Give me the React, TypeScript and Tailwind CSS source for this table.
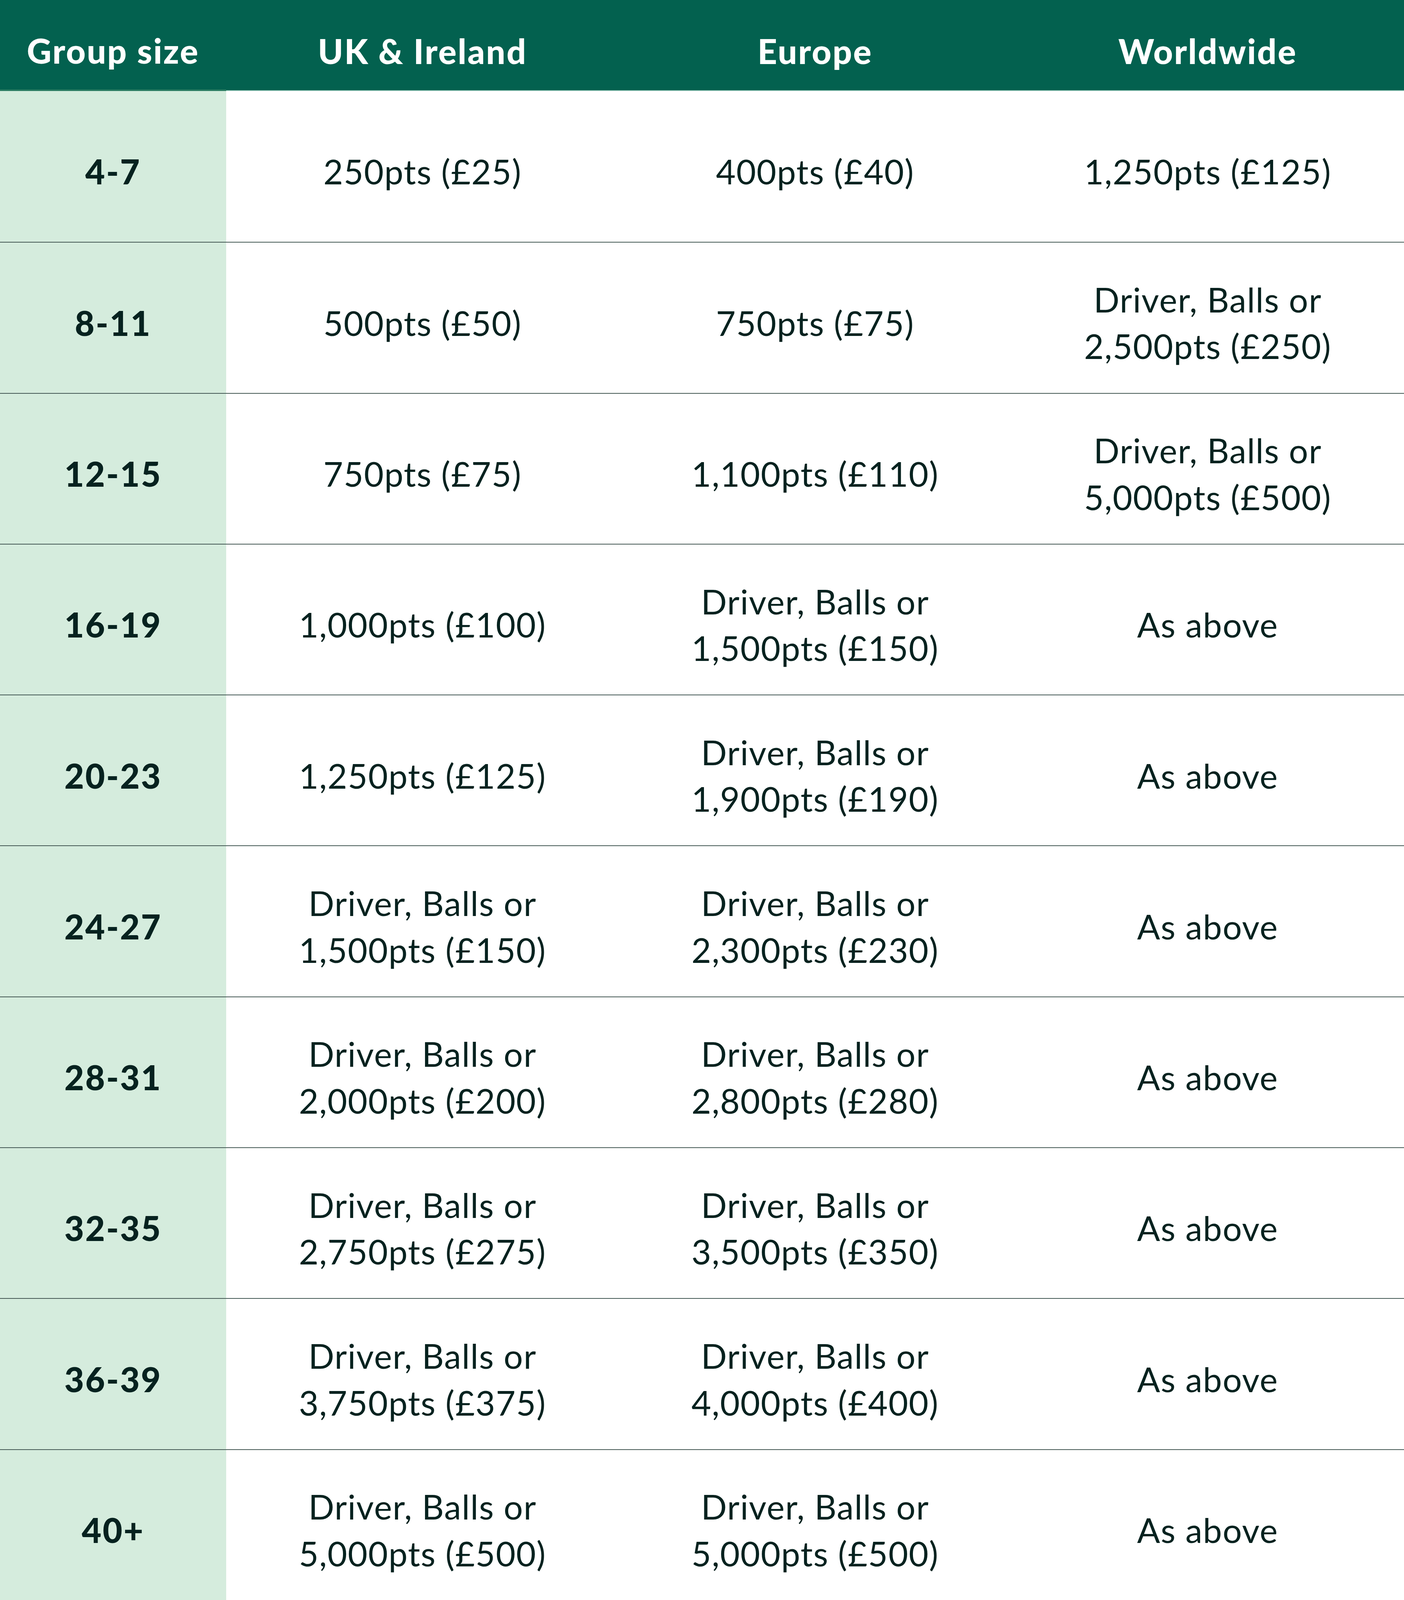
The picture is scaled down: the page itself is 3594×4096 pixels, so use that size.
import React from "react";

const rows: { size: string; uk: string[]; eu: string[]; ww: string[] }[] = [
  { size: "4-7", uk: ["250pts (£25)"], eu: ["400pts (£40)"], ww: ["1,250pts (£125)"] },
  { size: "8-11", uk: ["500pts (£50)"], eu: ["750pts (£75)"], ww: ["Driver, Balls or", "2,500pts (£250)"] },
  { size: "12-15", uk: ["750pts (£75)"], eu: ["1,100pts (£110)"], ww: ["Driver, Balls or", "5,000pts (£500)"] },
  { size: "16-19", uk: ["1,000pts (£100)"], eu: ["Driver, Balls or", "1,500pts (£150)"], ww: ["As above"] },
  { size: "20-23", uk: ["1,250pts (£125)"], eu: ["Driver, Balls or", "1,900pts (£190)"], ww: ["As above"] },
  { size: "24-27", uk: ["Driver, Balls or", "1,500pts (£150)"], eu: ["Driver, Balls or", "2,300pts (£230)"], ww: ["As above"] },
  { size: "28-31", uk: ["Driver, Balls or", "2,000pts (£200)"], eu: ["Driver, Balls or", "2,800pts (£280)"], ww: ["As above"] },
  { size: "32-35", uk: ["Driver, Balls or", "2,750pts (£275)"], eu: ["Driver, Balls or", "3,500pts (£350)"], ww: ["As above"] },
  { size: "36-39", uk: ["Driver, Balls or", "3,750pts (£375)"], eu: ["Driver, Balls or", "4,000pts (£400)"], ww: ["As above"] },
  { size: "40+", uk: ["Driver, Balls or", "5,000pts (£500)"], eu: ["Driver, Balls or", "5,000pts (£500)"], ww: ["As above"] },
];

function Cell({ lines }: { lines: string[] }) {
  return (
    <div className="flex items-center justify-center pt-[26px] text-center tracking-[1.6px]">
      <div>
        {lines.map((l, i) => (
          <div key={i}>{l}</div>
        ))}
      </div>
    </div>
  );
}

export default function App() {
  return (
    <div
      className="w-[3594px] h-[4096px] overflow-hidden bg-white text-[#06221f] text-[87px] leading-[119.5px]"
      style={{ fontFamily: "Lato, 'Open Sans', sans-serif" }}
    >
      <div className="grid grid-cols-[579px_1fr_1fr_1fr] h-[233px] bg-[#03614f] text-white font-black tracking-[3px]">
        <div className="flex items-center justify-center pt-[30px] border-b-[4px] border-[#2a7b61]">Group size</div>
        <div className="flex items-center justify-center pt-[30px] border-b-[2px] border-[#9ccbbd]">UK &amp; Ireland</div>
        <div className="flex items-center justify-center pt-[30px] border-b-[2px] border-[#9ccbbd]">Europe</div>
        <div className="flex items-center justify-center pt-[30px] border-b-[2px] border-[#9ccbbd]">Worldwide</div>
      </div>
      {rows.map((r, i) => (
        <div
          key={r.size}
          className={
            i === 0
              ? "grid grid-cols-[579px_1fr_1fr_1fr] h-[386.3px]"
              : "grid grid-cols-[579px_1fr_1fr_1fr] h-[386.3px] border-t-[2px] border-[#455955]"
          }
        >
          <div className="flex items-center justify-center pt-[26px] bg-[#d5ecdd] font-black tracking-[3px]">{r.size}</div>
          <Cell lines={r.uk} />
          <Cell lines={r.eu} />
          <Cell lines={r.ww} />
        </div>
      ))}
    </div>
  );
}
